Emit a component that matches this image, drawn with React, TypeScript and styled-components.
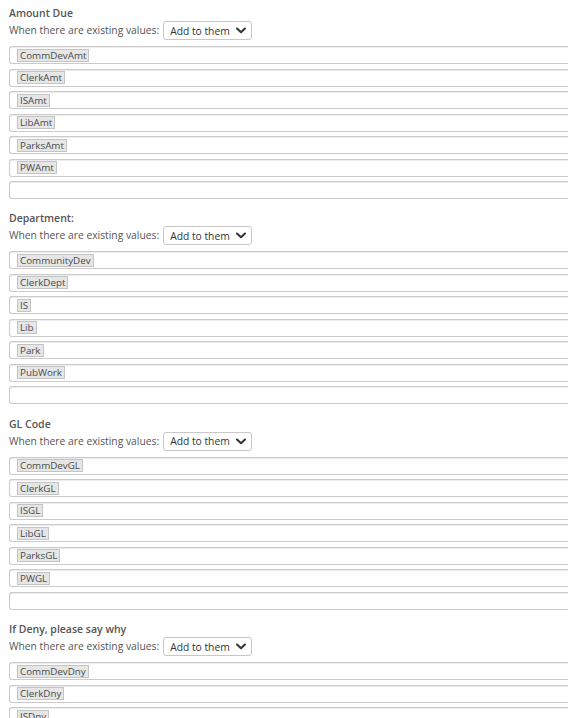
import React, { FC } from "react";
import styled, { createGlobalStyle } from "styled-components";

const GlobalStyle = createGlobalStyle`
  html, body {
    margin: 0;
    padding: 0;
    background: #fff;
    overflow: hidden;
  }
  body {
    font-family: "Open Sans", "Liberation Sans", Arial, sans-serif;
    font-size: 10.3px;
    color: #555;
  }
`;

const Page = styled.div`
  padding: 5px 0 0 9px;
  width: 580px;
`;

const Section = styled.section`
  margin-bottom: 6.9px;
`;

const Title = styled.div`
  font-weight: 600;
  font-size: 10.5px;
  line-height: 16px;
  color: #555;
`;

const ModeRow = styled.div`
  display: flex;
  align-items: center;
  gap: 4px;
  height: 19px;
  margin-bottom: 6px;
`;

const ModeLabel = styled.span`
  line-height: 19px;
  white-space: nowrap;
`;

const SelectBox = styled.div`
  display: flex;
  align-items: center;
  justify-content: space-between;
  box-sizing: border-box;
  width: 89px;
  height: 19px;
  padding: 0 5px 0 6px;
  border: 1px solid #c8c8c8;
  border-radius: 3px;
  color: #333;
  background: #fff;
`;

const FieldList = styled.div`
  display: flex;
  flex-direction: column;
`;

const Field = styled.div`
  display: flex;
  align-items: center;
  box-sizing: border-box;
  height: 18px;
  margin-bottom: 4.5px;
  padding-left: 7px;
  border: 1px solid #cbcbcb;
  border-right: none;
  border-radius: 3px 0 0 3px;
  box-shadow: inset 0 1px 1px rgba(0, 0, 0, 0.08);
  background: #fff;
`;

const Chip = styled.span`
  display: inline-block;
  box-sizing: border-box;
  height: 13px;
  line-height: 11px;
  padding: 0 2px;
  border: 1px solid #c4c4c4;
  background: #e6e6e6;
  color: #4a4a4a;
  font-size: 9.8px;
`;

const Chevron: FC = () => (
  <svg width="10" height="7" viewBox="0 0 10 7">
    <path
      d="M1 1.5 L5 5.2 L9 1.5"
      fill="none"
      stroke="#333"
      strokeWidth="2"
      strokeLinecap="round"
      strokeLinejoin="round"
    />
  </svg>
);

interface GroupData {
  title: string;
  values: string[];
}

const groups: GroupData[] = [
  {
    title: "Amount Due",
    values: ["CommDevAmt", "ClerkAmt", "ISAmt", "LibAmt", "ParksAmt", "PWAmt", ""],
  },
  {
    title: "Department:",
    values: ["CommunityDev", "ClerkDept", "IS", "Lib", "Park", "PubWork", ""],
  },
  {
    title: "GL Code",
    values: ["CommDevGL", "ClerkGL", "ISGL", "LibGL", "ParksGL", "PWGL", ""],
  },
  {
    title: "If Deny, please say why",
    values: ["CommDevDny", "ClerkDny", "ISDny", "LibDny", "ParksDny", "PWDny", ""],
  },
];

const FieldGroup: FC<{ group: GroupData }> = ({ group }) => (
  <Section>
    <Title>{group.title}</Title>
    <ModeRow>
      <ModeLabel>When there are existing values:</ModeLabel>
      <SelectBox>
        <span>Add to them</span>
        <Chevron />
      </SelectBox>
    </ModeRow>
    <FieldList>
      {group.values.map((v, i) => (
        <Field key={i}>{v && <Chip>{v}</Chip>}</Field>
      ))}
    </FieldList>
  </Section>
);

const App: FC = () => (
  <>
    <GlobalStyle />
    <Page>
      {groups.map((g) => (
        <FieldGroup key={g.title} group={g} />
      ))}
    </Page>
  </>
);

export default App;
